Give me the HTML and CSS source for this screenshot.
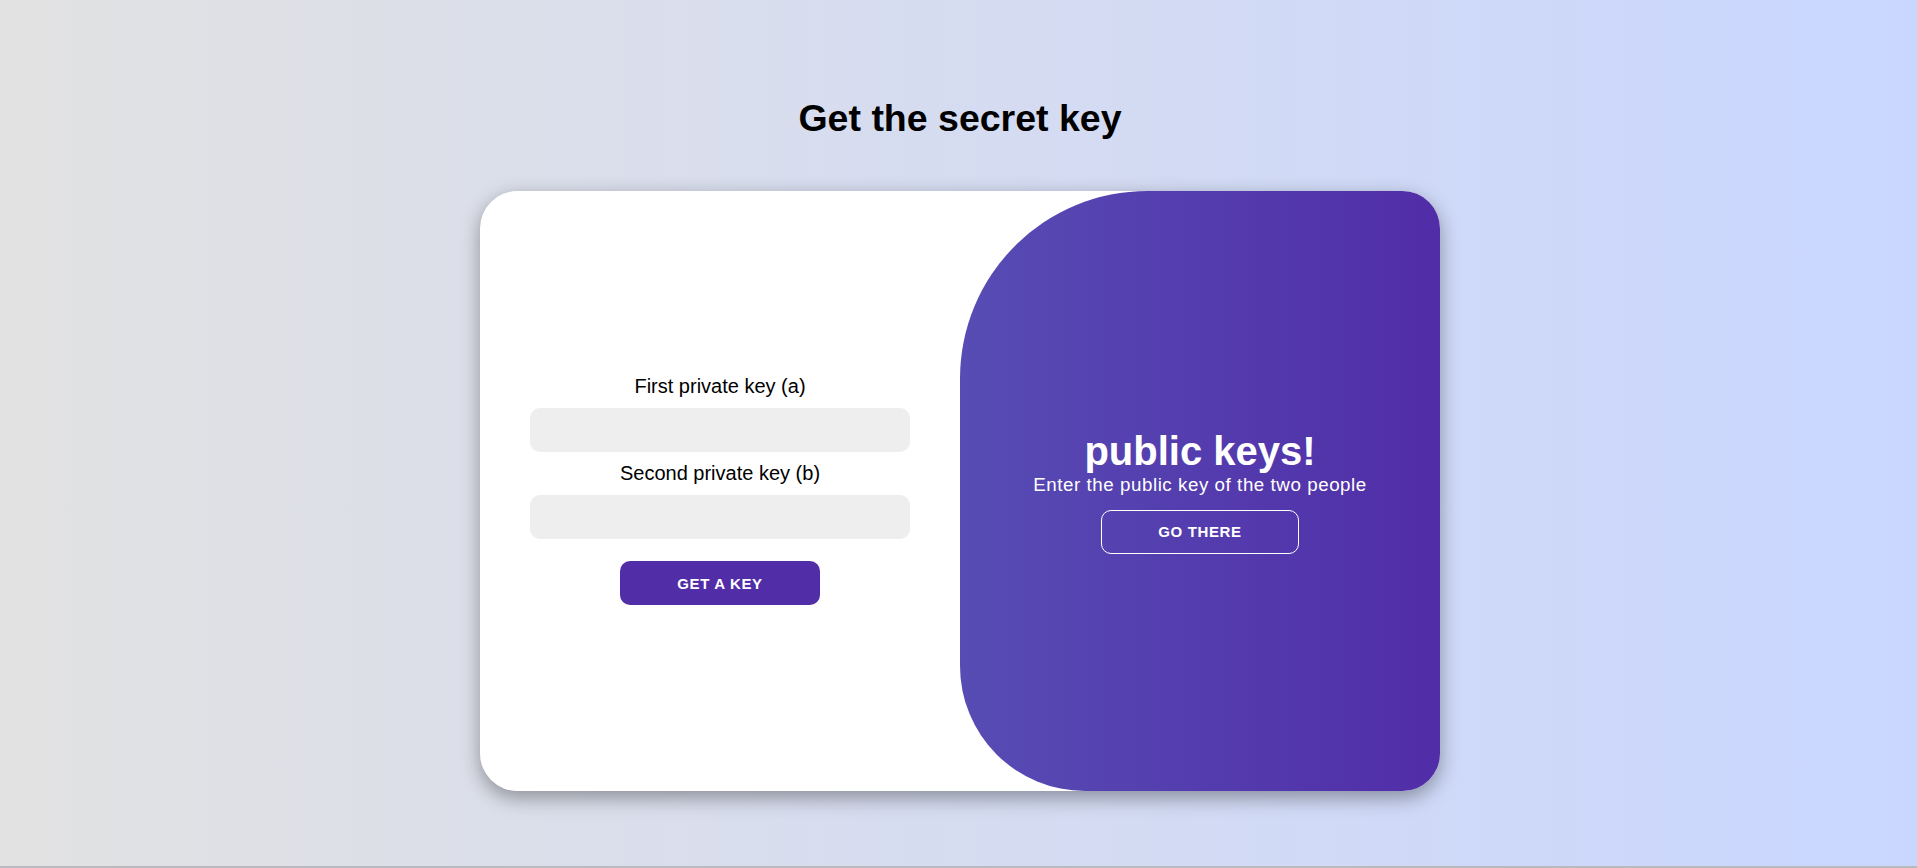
FILE: index.html
```html
<!DOCTYPE html>
<html lang="en">
<head>
<meta charset="utf-8">
<title>Get the secret key</title>
<link rel="stylesheet" href="styles.css">
</head>
<body>
  <h1 class="title">Get the secret key</h1>
  <div class="card">
    <form class="form-side">
      <label class="field-label" for="a">First private key (a)</label>
      <input class="field" id="a" type="text">
      <label class="field-label" for="b">Second private key (b)</label>
      <input class="field" id="b" type="text">
      <button class="btn" type="button">Get a key</button>
    </form>
    <div class="toggle-side">
      <h2 class="toggle-title">public keys!</h2>
      <p class="toggle-text">Enter the public key of the two people</p>
      <button class="btn btn-ghost" type="button">Go there</button>
    </div>
  </div>
</body>
</html>
```

FILE: styles.css
```css
* {
  box-sizing: border-box;
}

html {
  height: 100%;
}

body {
  margin: 0;
  height: 100vh;
  padding: 97px 0 0 3px;
  background: linear-gradient(to right, #e2e2e2, #c9d6ff);
  border-bottom: 2px solid #b9b9bf;
  font-family: "Liberation Sans", Arial, sans-serif;
  color: #000;
  display: flex;
  flex-direction: column;
  align-items: center;
}

.title {
  margin: 0 0 51px;
  font-size: 37.5px;
  font-weight: 700;
  line-height: normal;
}

.card {
  width: 960px;
  height: 600px;
  background: #fff;
  border-radius: 37.5px;
  box-shadow: 0 6.25px 18.75px rgba(0, 0, 0, 0.35);
  overflow: hidden;
  display: grid;
  grid-template-columns: 1fr 1fr;
}

.form-side {
  margin: 0;
  padding: 0 50px 2px;
  display: flex;
  flex-direction: column;
  align-items: center;
  justify-content: center;
  text-align: center;
}

.field-label {
  font-size: 20px;
  line-height: normal;
}

.field {
  width: 100%;
  margin: 10px 0;
  padding: 12.5px 18.75px;
  border: none;
  border-radius: 10px;
  background: #eee;
  font-family: inherit;
  font-size: 16.25px;
  outline: none;
}

.btn {
  margin-top: 12.5px;
  padding: 12.5px 56.25px;
  border: 1.25px solid transparent;
  border-radius: 10px;
  background: #512da8;
  color: #fff;
  font-family: inherit;
  font-size: 15px;
  font-weight: 700;
  letter-spacing: 0.625px;
  text-transform: uppercase;
  line-height: normal;
  cursor: pointer;
}

.btn-ghost {
  margin-top: 14px;
  background: transparent;
  border-color: #fff;
}

.toggle-side {
  background: linear-gradient(to right, #574cb4, #512da8);
  border-radius: 187.5px 0 0 125px;
  padding: 0 37.5px;
  color: #fff;
  display: flex;
  flex-direction: column;
  align-items: center;
  justify-content: center;
  text-align: center;
}

.toggle-title {
  margin: 0;
  font-size: 40px;
  font-weight: 700;
  line-height: normal;
}

.toggle-text {
  margin: 0;
  font-size: 18.75px;
  line-height: 22px;
  letter-spacing: 0.55px;
}
```
